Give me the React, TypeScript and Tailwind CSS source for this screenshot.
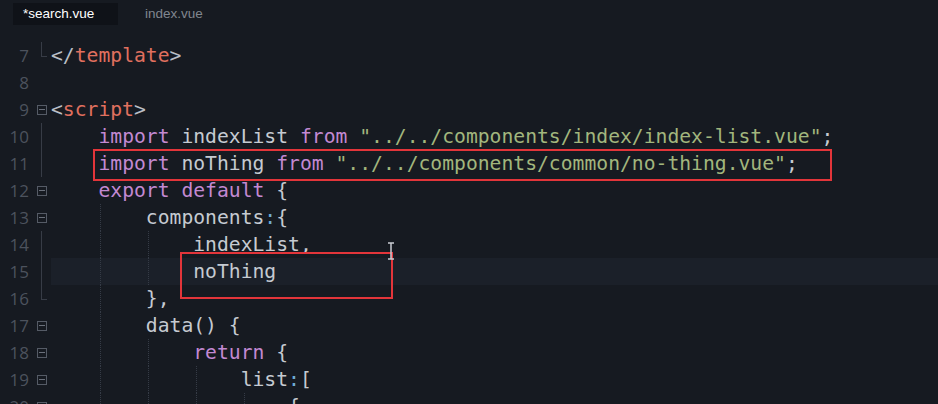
import React from 'react';

type Tok = [string, string];

const C = {
  id: 'text-[#c5cad1]',
  kw: 'text-[#c389d2]',
  str: 'text-[#a2b67d]',
  tag: 'text-[#e0705f]',
  br: 'text-[#b9bec6]',
  col: 'text-[#6fabd3]',
};

type Mark = 'box' | 'line' | 'end' | 'none';

interface Line {
  n: number;
  indent: number;
  mark: Mark;
  toks: Tok[];
}

const lines: Line[] = [
  { n: 7, indent: 0, mark: 'end', toks: [[C.br, '</'], [C.tag, 'template'], [C.br, '>']] },
  { n: 8, indent: 0, mark: 'none', toks: [] },
  { n: 9, indent: 0, mark: 'box', toks: [[C.br, '<'], [C.tag, 'script'], [C.br, '>']] },
  {
    n: 10, indent: 1, mark: 'line',
    toks: [[C.kw, 'import'], [C.id, ' indexList '], [C.kw, 'from'], [C.id, ' '], [C.str, '"../../components/index/index-list.vue"'], [C.id, ';']],
  },
  {
    n: 11, indent: 1, mark: 'line',
    toks: [[C.kw, 'import'], [C.id, ' noThing '], [C.kw, 'from'], [C.id, ' '], [C.str, '"../../components/common/no-thing.vue"'], [C.id, ';']],
  },
  { n: 12, indent: 1, mark: 'box', toks: [[C.kw, 'export default'], [C.id, ' {']] },
  { n: 13, indent: 2, mark: 'box', toks: [[C.id, 'components'], [C.col, ':'], [C.id, '{']] },
  { n: 14, indent: 3, mark: 'line', toks: [[C.id, 'indexList,']] },
  { n: 15, indent: 3, mark: 'line', toks: [[C.id, 'noThing']] },
  { n: 16, indent: 2, mark: 'end', toks: [[C.id, '},']] },
  { n: 17, indent: 2, mark: 'box', toks: [[C.id, 'data() {']] },
  { n: 18, indent: 3, mark: 'box', toks: [[C.kw, 'return'], [C.id, ' {']] },
  { n: 19, indent: 4, mark: 'box', toks: [[C.id, 'list'], [C.col, ':'], [C.id, '[']] },
  { n: 20, indent: 5, mark: 'box', toks: [[C.id, '{']] },
];

const FoldMark = ({ mark }: { mark: Mark }) => {
  if (mark === 'box') {
    return (
      <div className="w-[10px] h-[10px] border border-[#555b66] flex items-center justify-center">
        <div className="w-[6px] h-px bg-[#6a707b]" />
      </div>
    );
  }
  if (mark === 'line') {
    return <div className="w-px h-[27px] bg-[#373c46] ml-[4px]" />;
  }
  if (mark === 'end') {
    return (
      <div className="h-[27px] w-[10px] flex flex-col items-start">
        <div className="w-px h-[14px] bg-[#373c46] ml-[4px]" />
        <div className="w-[6px] h-px bg-[#373c46] ml-[4px]" />
      </div>
    );
  }
  return null;
};

const App: React.FC = () => {
  return (
    <div className="w-[938px] h-[404px] overflow-hidden bg-[#161a21] relative font-['Liberation_Sans',sans-serif]">
      {/* tab bar */}
      <div className="h-[30px] flex items-start pl-[13px]">
        <div className="mt-[3px] h-[22px] w-[105px] bg-[#0f1218] text-white text-[13.5px] leading-[22px] pl-[10px]">
          *search.vue
        </div>
        <div className="ml-[27px] mt-[3px] h-[22px] text-[#80868f] text-[13.5px] leading-[22px]">index.vue</div>
      </div>

      {/* editor */}
      <div className="pt-[12px] flex flex-col">
        {lines.map((l) => (
          <div key={l.n} className="h-[27px] flex items-center relative shrink-0">
            <div className="w-[29px] text-right text-[#4c525d] text-[17px] font-['Open_Sans',sans-serif]">{l.n}</div>
            <div className="w-[22px] h-[27px] flex items-center pl-[8px]">
              <FoldMark mark={l.mark} />
            </div>
            <div
              className={`flex-1 h-[27px] flex items-center relative ${l.n === 15 ? 'bg-[#1b2029]' : ''}`}
            >
              {Array.from({ length: Math.max(0, l.indent - 1) }).map((_, k) => (
                <div
                  key={k}
                  className="absolute top-0 h-[27px] border-l border-dotted border-[#353b46]"
                  style={{ left: 48 * (k + 1) + 1 }}
                />
              ))}
              <pre className="font-['DejaVu_Sans_Mono',monospace] text-[19.7px] leading-[27px] whitespace-pre">
                {' '.repeat(l.indent * 4)}
                {l.toks.map((t, i) => (
                  <span key={i} className={t[0]}>
                    {t[1]}
                  </span>
                ))}
              </pre>
            </div>
          </div>
        ))}
      </div>

      {/* annotation boxes */}
      <div className="absolute left-[93px] top-[149px] w-[739px] h-[32px] border-2 border-[#e3353a]" />
      <div className="absolute left-[180px] top-[252px] w-[213px] h-[47px] border-2 border-[#e3353a]" />

      {/* I-beam cursor */}
      <svg className="absolute left-[386px] top-[242px]" width="10" height="18" viewBox="0 0 10 18">
        <path d="M2 1h6M2 17h6M5 1v16" stroke="#c9ccd2" strokeWidth="1.5" fill="none" />
      </svg>
    </div>
  );
};

export default App;
